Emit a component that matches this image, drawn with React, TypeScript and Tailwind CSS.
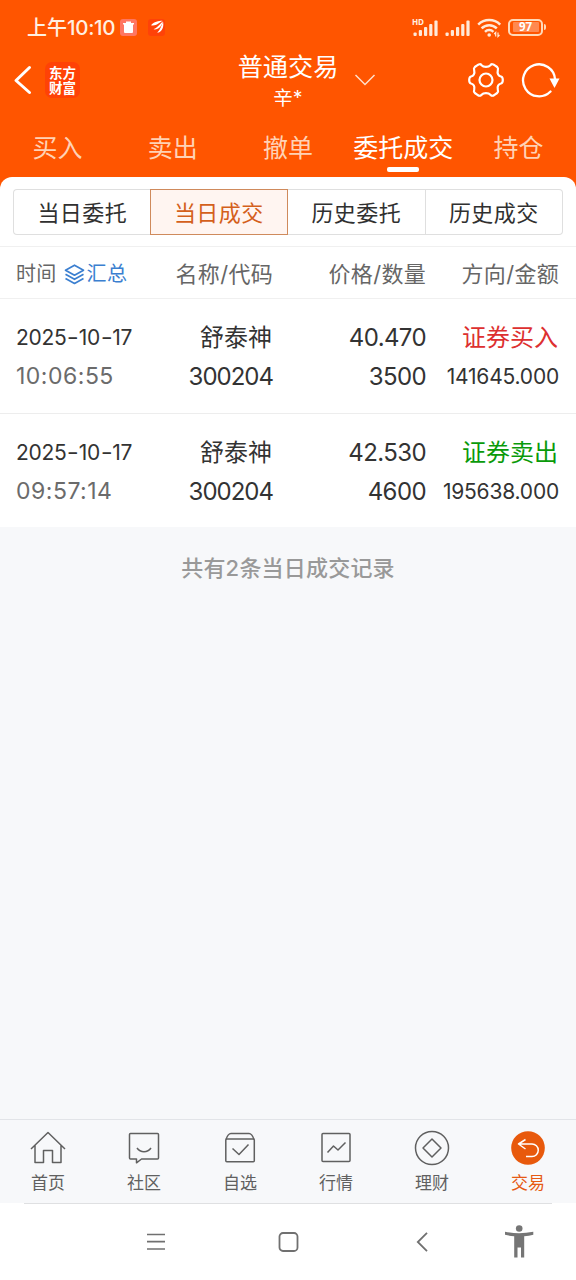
import type { ReactNode } from "react";
import clsx from "clsx";

const tabs = ["买入", "卖出", "撤单", "委托成交", "持仓"];
const segments = ["当日委托", "当日成交", "历史委托", "历史成交"];

const deals = [
    {
        date: "2025-10-17",
        time: "10:06:55",
        name: "舒泰神",
        code: "300204",
        price: "40.470",
        count: "3500",
        side: "证券买入",
        amount: "141645.000",
        buy: true,
    },
    {
        date: "2025-10-17",
        time: "09:57:14",
        name: "舒泰神",
        code: "300204",
        price: "42.530",
        count: "4600",
        side: "证券卖出",
        amount: "195638.000",
        buy: false,
    },
];

const Signal = () => (
    <svg width="26" height="18" viewBox="0 0 26 18" fill="#ffe9d8">
        <rect x="0.5" y="13.5" width="3.2" height="3.5" rx="1" />
        <rect x="5.8" y="11" width="3.2" height="6" rx="1" />
        <rect x="11" y="8" width="3.2" height="9" rx="1" />
        <rect x="16.2" y="5" width="3.2" height="12" rx="1" />
        <rect x="21.4" y="1.5" width="3.2" height="15.5" rx="1" />
    </svg>
);

const StatusBar = () => (
    <div className="flex h-[54px] items-center pl-[27px] pr-[30px] text-[#fff0e2]">
        <span className="w-[93px] shrink-0 whitespace-nowrap pt-[2px] text-[20px] font-medium leading-none">
            上午<span className="text-[20.5px] tracking-[-0.3px]">10:10</span>
        </span>
        <span className="flex h-[17px] w-[17px] items-center justify-center rounded-[3px] bg-[#ff7661]">
            <svg width="11" height="12" viewBox="0 0 11 12" fill="#fff">
                <path d="M0 2h3V.5h5V2h3v1.500h-1V11a1 1 0 0 1-1 1H2a1 1 0 0 1-1-1V3.500H0z" />
            </svg>
        </span>
        <span className="ml-[11px] flex h-[17px] w-[17px] items-center justify-center rounded-[3px] bg-[#ff4208]">
            <svg width="14" height="14" viewBox="0 0 14 14" fill="#fff">
                <path d="M1 5.300C4 1.500 8.500 1 12.500.8 9 3 6 6.500 1 5.300z" />
                <path d="M3.500 9.300C7 8 9.500 4.500 12.800 1.200 12 6 8.500 10 3.500 9.300z" />
                <path d="M7.200 12.800C10 10 11.500 6 13 1.500 14.200 7 12 12 7.200 12.800z" />
            </svg>
        </span>
        <div className="ml-auto flex items-center pt-[2px]">
            <div className="relative">
                <span className="absolute -left-px -top-px font-['Open_Sans'] text-[8px] font-bold leading-none">HD</span>
                <Signal />
            </div>
            <div className="ml-[6px]">
                <Signal />
            </div>
            <svg className="ml-[6px]" width="25" height="20" viewBox="0 0 25 20" fill="none" stroke="#ffe9d8">
                <path d="M1.200 6.700a15.500 15.500 0 0 1 22 0" strokeWidth="2.500" />
                <path d="M4.600 10.300a10.700 10.700 0 0 1 15.200 0" strokeWidth="2.500" />
                <path d="M8 13.800a6 6 0 0 1 8.400 0" strokeWidth="2.500" />
                <circle cx="12.200" cy="17" r="1.800" fill="#ffe9d8" stroke="none" />
                <path d="M18.700 18.500v-4l-1.500 1.500M21 14.500v4l1.500-1.500" strokeWidth="1.200" />
            </svg>
            <span className="-mt-[2px] ml-[6px] flex h-[17px] w-[35px] items-center justify-center rounded-[5px] border-2 border-[#ffd9b8]">
                <span className="flex h-[10px] w-[26px] items-center justify-center rounded-[1px] bg-[#ff8950] font-['Open_Sans'] text-[11.5px] font-bold leading-none text-white">
                    97
                </span>
            </span>
            <span className="-mt-[2px] ml-px h-[6px] w-[2px] rounded-r bg-[#ffd9b8]" />
        </div>
    </div>
);

const TitleBar = () => (
    <div className="grid h-[64px] grid-cols-[1fr_102px_1fr] items-start">
        <div className="flex items-center pl-[13px] pt-[8px]">
            <svg width="20" height="30" viewBox="0 0 20 30" fill="none" stroke="#fff" strokeWidth="3" strokeLinecap="round" strokeLinejoin="round">
                <path d="M16.500 2.500 3 15.500l13.500 12" />
            </svg>
            <div className="ml-[12px] flex h-[36px] w-[35px] items-center justify-center rounded-[7px] bg-[#ff4206] font-['Noto_Sans_CJK_SC'] text-[13.5px] font-bold leading-[15.5px] text-white">
                <span>
                    东方
                    <br />
                    财富
                </span>
            </div>
        </div>
        <div className="-mt-[4px] flex flex-col items-center whitespace-nowrap text-white">
            <span className="text-[25.2px] leading-[34px]">普通交易</span>
            <span className="text-[19.5px] leading-[28px]">辛*</span>
        </div>
        <div className="flex items-center pl-[15px] pr-[16px] pt-[8px]">
            <svg width="22" height="14" viewBox="0 0 22 14" fill="none" stroke="#ffe0cc" strokeWidth="1.500">
                <path d="m1.500 2 9.500 9.500L20.500 2" />
            </svg>
            <svg className="ml-auto" width="36" height="36" viewBox="0 0 36 36" fill="none" stroke="#fff" strokeWidth="2.200" strokeLinejoin="round">
                <circle cx="18" cy="18" r="6.500" />
                <path d="M9.500 3.200C11 2 12.500 1.800 13.600 3.200C15.500 5.400 20.500 5.400 22.400 3.200C23.500 1.800 25 2 26.500 3.200L29.200 5C30.400 6 30.200 7.300 29.800 8.600C29 11.500 30.500 14 33 14.500C34.500 15 34.800 16.300 34.800 18C34.800 19.700 34.500 21 33 21.500C30.500 22 29 24.500 29.800 27.400C30.200 28.700 30.400 30 29.200 31L26.500 32.800C25 34 23.500 34.200 22.400 32.800C20.500 30.600 15.500 30.600 13.600 32.800C12.500 34.200 11 34 9.500 32.800L6.800 31C5.600 30 5.800 28.700 6.200 27.400C7 24.500 5.500 22 3 21.500C1.500 21 1.200 19.700 1.200 18C1.200 16.300 1.500 15 3 14.500C5.500 14 7 11.500 6.200 8.600C5.800 7.300 5.600 6 6.800 5z" />
            </svg>
            <svg className="ml-[17px]" width="39" height="36" viewBox="0 0 39 36" fill="none" stroke="#fff" strokeWidth="2.300">
                <path d="M29.500 29.500A16 16 0 1 1 34 17" strokeLinecap="round" />
                <path d="M28.500 16.500h10l-5 9.500z" fill="#fff" stroke="none" />
            </svg>
        </div>
    </div>
);

const LayersIcon = () => (
    <svg width="21" height="21" viewBox="0 0 21 21" fill="none" stroke="#3b7fd0" strokeWidth="1.700" strokeLinejoin="round">
        <path d="m10.500 1.200 9 5-9 5-9-5z" />
        <path d="m1.500 10.300 9 5 9-5M1.500 14.500l9 5 9-5" />
    </svg>
);

const icons: Record<string, ReactNode> = {
    首页: <path d="M1 19 18 2.500 35 19M5 15.500v17h8.500v-12h9v12H31v-17" />,
    社区: (
        <>
            <path d="M4.500 3.500h27a1 1 0 0 1 1 1v23.500a1 1 0 0 1-1 1H15.500l-5 3.800V29H4.500a1 1 0 0 1-1-1V4.500a1 1 0 0 1 1-1z" />
            <path d="M11 18c3.500 5 10.500 5 14 0" />
        </>
    ),
    自选: (
        <>
            <rect x="3.800" y="9" width="28.500" height="22.800" rx="1" />
            <path d="M4 9.500Q6 3.500 9 3.500h18Q30 3.500 32 9.500M10.500 18.500l6.500 6 9.500-10" />
        </>
    ),
    行情: (
        <>
            <rect x="4" y="3.500" width="28" height="28" rx="1" />
            <path d="m9.500 22.500 6-6.500 4.500 4 7.500-7.500" />
        </>
    ),
    理财: (
        <>
            <circle cx="18" cy="18" r="16.500" />
            <path d="m18 9 9 9-9 9-9-9z" />
        </>
    ),
    交易: (
        <>
            <circle cx="18" cy="18" r="16.800" fill="#e8590c" stroke="none" />
            <path d="M15.500 9.500 8.500 14l7 5M8.500 14H22a6 6 0 0 1 0 12.500h-6" stroke="#fff" />
        </>
    ),
};

const BottomNav = () => (
    <nav className="h-[84px] border-t border-[#e2e4e8] bg-[#f7f8fa]">
        <div className="grid grid-cols-6 pt-[10px]">
            {Object.entries(icons).map(([label, icon]) => (
                <div
                    key={label}
                    className={clsx(
                        "flex flex-col items-center text-[17px]",
                        label === "交易" ? "text-[#e65a14]" : "text-[#606060]"
                    )}
                >
                    <svg width="36" height="36" viewBox="0 0 36 36" fill="none" stroke="currentColor" strokeWidth="1.500" strokeLinejoin="round">
                        {icon}
                    </svg>
                    <span className="mt-[5px] leading-[24px]">{label}</span>
                </div>
            ))}
        </div>
    </nav>
);

const SystemNav = () => (
    <div className="h-[77px] bg-white px-[24px]">
        <div className="flex h-full items-center border-t border-[#dfe0e2] pl-[122px] pr-[18px] text-[#707070]">
            <svg width="20" height="20" viewBox="0 0 20 20" stroke="currentColor" strokeWidth="1.700">
                <path d="M1 2.500h18M1 9.700h18M1 17h18" />
            </svg>
            <svg className="ml-[112px]" width="21" height="21" viewBox="0 0 21 21" fill="none" stroke="currentColor" strokeWidth="1.800">
                <rect x="1.500" y="1" width="18" height="18" rx="3.500" />
            </svg>
            <svg className="ml-[117px]" width="12" height="21" viewBox="0 0 12 21" fill="none" stroke="currentColor" strokeWidth="1.800">
                <path d="M11 .8 1.800 10l9.200 9.200" />
            </svg>
            <svg className="ml-auto" width="30" height="34" viewBox="0 0 30 34" fill="#757575">
                <circle cx="15.200" cy="3.500" r="3.300" />
                <path d="M1 6.800Q15 9.500 29.300 6.800V9.800Q25 11 20.200 11.300V32.500H17V22.500h-3.500v10h-3.300V11.300Q5.500 11 1 9.800z" />
            </svg>
        </div>
    </div>
);

export default function App() {
    return (
        <div className="flex h-[1280px] w-[576px] flex-col overflow-hidden bg-[#f7f8fa] font-['Inter','Noto_Sans_CJK_SC',sans-serif]">
            <header className="h-[177px] bg-[#ff5500]">
                <StatusBar />
                <TitleBar />
                <div className="grid h-[59px] grid-cols-5">
                    {tabs.map((tab) => (
                        <div
                            key={tab}
                            className={clsx(
                                "flex flex-col items-center whitespace-nowrap pt-[12px] text-[25px] leading-[36px]",
                                tab === "委托成交" ? "text-[25.5px] text-white" : "text-[#ffd2b5]"
                            )}
                        >
                            {tab}
                            {tab === "委托成交" && <span className="mt-px h-[5px] w-[32px] rounded-[2px] bg-white" />}
                        </div>
                    ))}
                </div>
            </header>

            <div className="bg-[#ff5500]">
                <div className="rounded-t-[12px] bg-white px-[13px] pb-[11px] pt-[12px]">
                    <div className="grid h-[46px] grid-cols-4">
                        {segments.map((item, i) => (
                            <div
                                key={item}
                                className={clsx(
                                    "flex items-center justify-center border pt-[2px] text-[22px] tracking-[0.4px]",
                                    i === 1 ? "-ml-px border-[#cf8a5c] bg-[#fff5f1] text-[#d4601c]" : "border-[#dfdfdf] text-[#303030]",
                                    i === 0 && "rounded-l-[4px] border-r-0",
                                    i === 2 && "border-l-0",
                                    i === 3 && "rounded-r-[4px] border-l-0"
                                )}
                            >
                                {item}
                            </div>
                        ))}
                    </div>
                </div>
            </div>

            <div className="grid h-[53px] grid-cols-[137px_120px_153px_133px] items-center border-y border-[#f0f0f0] bg-white pl-[16px] pt-[3px] text-right text-[22px] tracking-[0.3px] text-[#666]">
                <div className="flex items-center text-[20px]">
                    时间
                    <span className="ml-[7px] flex items-center gap-[2px] text-[#3b7fd0]">
                        <LayersIcon />
                        汇总
                    </span>
                </div>
                <span>名称/代码</span>
                <span>价格/数量</span>
                <span>方向/金额</span>
            </div>

            {deals.map((deal, i) => (
                <div
                    key={deal.time}
                    className={clsx(
                        "grid grid-cols-[137px_120px_153px_133px] bg-white pl-[16px] pt-[19px] text-right text-[24px] leading-[39px] text-[#333]",
                        i === 0 ? "h-[115px] border-b border-[#ededed]" : "h-[113px]"
                    )}
                >
                    <div className="flex flex-col text-left">
                        <span className="text-[21px] tracking-[-0.3px]">
                            {deal.date.split("-").map((part, n) => (
                                <span key={n}>
                                    {n > 0 && <span className="mx-[1.5px] inline-block scale-x-125">-</span>}
                                    {part}
                                </span>
                            ))}
                        </span>
                        <span className="text-[23px] tracking-[0.5px] text-[#6b6b6b]">{deal.time}</span>
                    </div>
                    <div className="flex flex-col">
                        <span className="pr-px">{deal.name}</span>
                        <span className="tracking-[-1px]">{deal.code}</span>
                    </div>
                    <div className="flex flex-col tracking-[-0.6px]">
                        <span>{deal.price}</span>
                        <span>{deal.count}</span>
                    </div>
                    <div className="flex flex-col">
                        <span className={clsx("pr-px", deal.buy ? "text-[#dd3030]" : "text-[#0a9a0a]")}>{deal.side}</span>
                        <span className="text-[21px] tracking-[-0.2px]">{deal.amount}</span>
                    </div>
                </div>
            ))}

            <p className="mt-[25px] text-center text-[22px] font-medium leading-[32px] tracking-[0.2px] text-[#999]">
                共有2条当日成交记录
            </p>

            <div className="mt-auto">
                <BottomNav />
                <SystemNav />
            </div>
        </div>
    );
}
